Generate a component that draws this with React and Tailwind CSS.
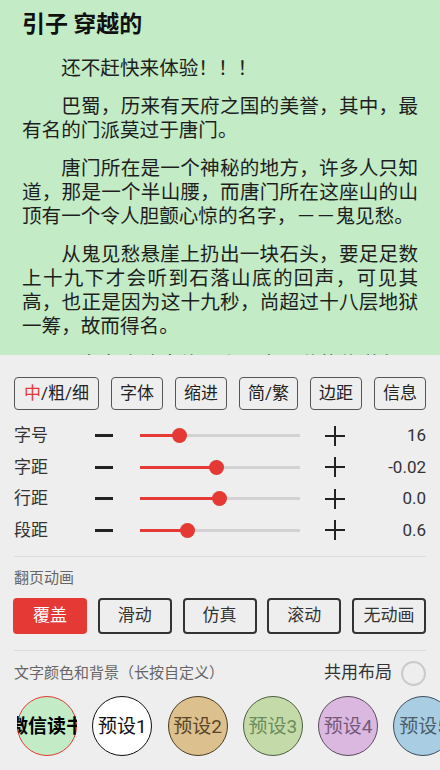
const sliders = [
  { label: '字号', pos: 39, value: '16' },
  { label: '字距', pos: 76, value: '-0.02' },
  { label: '行距', pos: 79, value: '0.0' },
  { label: '段距', pos: 47, value: '0.6' },
]

const tools = ['字体', '缩进', '简/繁', '边距', '信息']
const anims = ['覆盖', '滑动', '仿真', '滚动', '无动画']

const themes = [
  { name: '微信读书', bg: 'bg-[#c2ebc6]', border: 'border-[#e53935]', text: 'text-black font-bold' },
  { name: '预设1', bg: 'bg-white', border: 'border-[#111]', text: 'text-[#111]' },
  { name: '预设2', bg: 'bg-[#dcc08e]', border: 'border-[#4a3b22]', text: 'text-[#5a4528]' },
  { name: '预设3', bg: 'bg-[#c4dba9]', border: 'border-[#4c5e3e]', text: 'text-[#6c8c5c]' },
  { name: '预设4', bg: 'bg-[#dbb8e0]', border: 'border-[#5c4a5e]', text: 'text-[#76587a]' },
  { name: '预设5', bg: 'bg-[#a9cde2]', border: 'border-[#3c4c5a]', text: 'text-[#4a5e6e]' },
]

const paragraphs = [
  '还不赶快来体验！！！',
  '巴蜀，历来有天府之国的美誉，其中，最有名的门派莫过于唐门。',
  '唐门所在是一个神秘的地方，许多人只知道，那是一个半山腰，而唐门所在这座山的山顶有一个令人胆颤心惊的名字，－－鬼见愁。',
  '从鬼见愁悬崖上扔出一块石头，要足足数上十九下才会听到石落山底的回声，可见其高，也正是因为这十九秒，尚超过十八层地狱一筹，故而得名。',
  '一条条山路盘旋而上，鬼见愁的传说在民间流传甚广，无数人慕名而来。',
]

function Slider({ pos }) {
  return (
    <div className="relative w-[160px] h-[3px] bg-[#d2d2d2]">
      <div className="absolute left-0 top-0 h-[3px] bg-[#e53935]" style={{ width: pos }} />
      <div
        className="absolute top-[-6px] w-[15px] h-[15px] rounded-full bg-[#e53935]"
        style={{ left: pos - 7.5 }}
      />
    </div>
  )
}

export default function App() {
  return (
    <div className="w-[440px] h-[770px] flex flex-col overflow-hidden font-['Roboto','Noto_Sans_CJK_SC',sans-serif]">
      <div className="h-[355px] shrink-0 overflow-hidden bg-[#c2ebc6] px-[22px] pt-[8px] text-[#1e1e1e]">
        <h1 className="text-[23px] leading-[28px] font-bold text-[#111] font-['Noto_Sans_CJK_SC',sans-serif]">
          引子 穿越的
        </h1>
        <div className="mt-[19px] flex flex-col gap-[14px] text-[19.6px] leading-[24px] font-['Noto_Sans_CJK_SC',sans-serif]">
          {paragraphs.map((p, i) => (
            <p key={i} className="indent-[2em] text-justify">
              {p}
            </p>
          ))}
        </div>
      </div>

      <div className="flex-1 bg-[#eeeeee] px-[14px] pt-[22px]">
        <div className="flex justify-between text-[17px] text-[#222]">
          <button className="h-[33px] px-[9px] border border-[#555] rounded-[4px] leading-none">
            <span className="text-[#e53935]">中</span>/粗/细
          </button>
          {tools.map((t) => (
            <button key={t} className="h-[33px] px-[8px] border border-[#555] rounded-[4px] leading-none">
              {t}
            </button>
          ))}
        </div>

        <div className="mt-[10px]">
          {sliders.map((s) => (
            <div key={s.label} className="h-[31.5px] flex items-center text-[17px] text-[#333]">
              <span className="w-[81px]">{s.label}</span>
              <span className="w-[18px] h-[3px] bg-[#222]" />
              <div className="ml-[27px]">
                <Slider pos={s.pos} />
              </div>
              <span className="ml-[25px] relative w-[20px] h-[20px]">
                <span className="absolute left-0 top-[9px] w-[20px] h-[2px] bg-[#222]" />
                <span className="absolute left-[9px] top-0 w-[2px] h-[20px] bg-[#222]" />
              </span>
              <span className="flex-1 text-right">{s.value}</span>
            </div>
          ))}
        </div>

        <div className="mt-[10px] h-px bg-[#dcdcdc]" />
        <div className="mt-[11px] text-[15px] leading-[20px] text-[#666]">翻页动画</div>
        <div className="mt-[10px] flex justify-between -ml-px">
          {anims.map((a, i) =>
            i === 0 ? (
              <button key={a} className="w-[74px] h-[36px] rounded-[4px] bg-[#e53935] text-white text-[17px]">
                {a}
              </button>
            ) : (
              <button key={a} className="w-[74px] h-[36px] rounded-[4px] border-2 border-[#333] text-[#333] text-[17px]">
                {a}
              </button>
            )
          )}
        </div>

        <div className="mt-[16px] h-px bg-[#dcdcdc]" />
        <div className="mt-[9px] h-[26px] flex items-center justify-between">
          <span className="text-[15px] text-[#666]">文字颜色和背景（长按自定义）</span>
          <div className="flex items-center gap-[9px]">
            <span className="text-[17px] text-[#333]">共用布局</span>
            <span className="w-[25px] h-[25px] rounded-full border-2 border-[#cacaca]" />
          </div>
        </div>

        <div className="mt-[10px] -mr-[14px] ml-[3px] flex gap-[15.3px] overflow-hidden">
          {themes.map((t) => (
            <div
              key={t.name}
              className="shrink-0 w-[60px] h-[60px] grid grid-cols-[60px] grid-rows-[60px] place-items-center overflow-hidden"
            >
              <div className={`[grid-area:1/1] w-[60px] h-[60px] rounded-full border ${t.bg} ${t.border}`} />
              <span className={`[grid-area:1/1] whitespace-nowrap text-[19px] leading-none ${t.text}`}>
                {t.name}
              </span>
            </div>
          ))}
        </div>
      </div>
    </div>
  )
}
